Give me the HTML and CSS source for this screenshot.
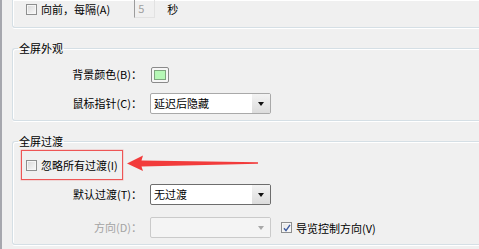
FILE: index.html
```html
<!DOCTYPE html>
<html lang="zh-CN">

<head>
    <meta charset="UTF-8">
    <title>全屏设置</title>
    <link rel="stylesheet" href="styles.css">
</head>

<body>
    <div class="page">
        <div class="group first">
            <div class="row auto">
                <span class="check"></span>
                <span class="text">向前，每隔(A)</span>
                <span class="spin">5</span>
                <span class="text sec">秒</span>
            </div>
        </div>

        <fieldset class="group">
            <legend>全屏外观</legend>
            <div class="form">
                <label>背景颜色(B)：</label>
                <div class="cell"><span class="swatch"><span></span></span></div>
                <label>鼠标指针(C)：</label>
                <div class="cell">
                    <div class="combo"><span class="value">延迟后隐藏</span><span class="drop"></span></div>
                </div>
            </div>
        </fieldset>

        <fieldset class="group third">
            <legend>全屏过渡</legend>
            <div class="mark">
                <span class="check"></span>
                <span class="text">忽略所有过渡(I)</span>
            </div>
            <div class="form tight">
                <label>默认过渡(T)：</label>
                <div class="cell">
                    <div class="combo focus"><span class="value">无过渡</span><span class="drop"></span></div>
                </div>
                <label class="off">方向(D)：</label>
                <div class="cell">
                    <div class="combo disabled"><span class="value"></span><span class="drop"></span></div>
                    <span class="check on">
                        <svg width="10" height="10" viewBox="0 0 10 10">
                            <path d="M2 5.2 L4 7.6 L8 1.8" fill="none" stroke="#3d5a9e" stroke-width="1.4" />
                        </svg>
                    </span>
                    <span class="text">导览控制方向(V)</span>
                </div>
            </div>
        </fieldset>

        <svg class="arrow" width="479" height="249" viewBox="0 0 479 249">
            <polygon points="127,163.5 143,155.5 141.5,160.5 258,162.3 258,163.8 141.5,166.5 143,171" fill="#f23b3b" />
        </svg>
    </div>
</body>

</html>
```

FILE: styles.css
```css
html,
body {
    margin: 0;
    width: 479px;
    height: 249px;
    overflow: hidden;
    background-color: #f0f0f0;
}

.page {
    position: relative;
    box-sizing: border-box;
    width: 479px;
    height: 249px;
    border-left: 2px solid #a6a7ae;
    padding-left: 10px;
    font-family: "Noto Sans CJK SC", "Microsoft YaHei", sans-serif;
    font-size: 11px;
    color: #000;
}

.group {
    box-sizing: border-box;
    margin: 0;
    padding: 0;
    border: 1px solid #d5dfe5;
    border-right: none;
    border-radius: 3px 0 0 3px;
    box-shadow: inset 1px 1px 0 #fff, 0 1px 0 #fff;
}

.first {
    height: 28px;
    border-top: none;
    border-radius: 0 0 0 3px;
}

fieldset.group {
    margin-top: 13px;
    padding-bottom: 6px;
    min-width: 0;
}

.third {
    padding-bottom: 7px;
}

legend {
    margin-left: 5px;
    padding: 0 1px;
    line-height: 14px;
    height: 14px;
}

.row {
    display: flex;
    align-items: center;
}

.auto {
    height: 18px;
    padding-left: 13px;
}

.text {
    margin-left: 4px;
    line-height: 14px;
    white-space: nowrap;
}

.sec {
    margin-left: 12px;
}

.spin {
    box-sizing: border-box;
    width: 21px;
    height: 18px;
    margin-left: 24px;
    padding-left: 3px;
    border: 1px solid #e2e2e2;
    border-left-color: #9c9c9c;
    border-top: none;
    color: #a0a0a0;
    line-height: 16px;
}

.check {
    box-sizing: border-box;
    display: inline-flex;
    width: 11px;
    height: 11px;
    border: 1px solid #8e8f8f;
    background: linear-gradient(135deg, #d8d8d8, #fafafa);
    box-shadow: inset 0 0 0 1px #f6f6f6;
    flex: none;
}

.check.on {
    margin-left: 10px;
    align-items: center;
    justify-content: center;
    background: linear-gradient(135deg, #e4e4e4, #fdfdfd);
}

.check.on svg {
    flex: none;
}

.form {
    display: grid;
    grid-template-columns: 129px auto;
    column-gap: 8px;
    row-gap: 8px;
    padding-top: 9px;
}

.form.tight {
    padding-top: 4px;
    row-gap: 12px;
}

label {
    text-align: right;
    line-height: 21px;
    white-space: nowrap;
}

label.off {
    color: #a3a3a3;
}

.cell {
    display: flex;
    align-items: center;
    height: 21px;
}

.swatch {
    box-sizing: border-box;
    display: inline-flex;
    width: 18px;
    height: 16px;
    margin-left: 1px;
    padding: 2px;
    border: 1px solid #8a8a8a;
    border-radius: 2px;
    background-color: #f6f6f6;
}

.swatch span {
    flex: 1;
    border: 1px solid #7fa57f;
    background-color: #b6f8b6;
}

.combo {
    box-sizing: border-box;
    display: flex;
    width: 121px;
    height: 21px;
    border: 1px solid #a9a9a9;
    border-radius: 2px;
    background-color: #fff;
}

.combo.focus {
    border-color: #6d6d6d;
}

.combo .value {
    flex: 1;
    padding-left: 3px;
    line-height: 19px;
}

.drop {
    position: relative;
    width: 18px;
    background: linear-gradient(#f3f3f3, #dcdcdc);
}

.drop::after {
    content: "";
    position: absolute;
    left: 6px;
    top: 8px;
    border-left: 3px solid transparent;
    border-right: 3px solid transparent;
    border-top: 4px solid #111;
}

.combo.disabled {
    border-color: #cacaca;
    background-color: #f4f4f4;
}

.combo.disabled .drop {
    background: #f4f4f4;
}

.combo.disabled .drop::after {
    border-top-color: #a8a8a8;
}

.mark {
    display: inline-flex;
    align-items: center;
    box-sizing: border-box;
    height: 30px;
    width: 102px;
    margin: 2px 0 0 8px;
    padding-left: 4px;
    border: 1px solid #ee5555;
    box-shadow: 0 0 0 0.5px rgba(238, 85, 85, 0.35);
}

.arrow {
    position: absolute;
    left: -2px;
    top: 0;
}
```
